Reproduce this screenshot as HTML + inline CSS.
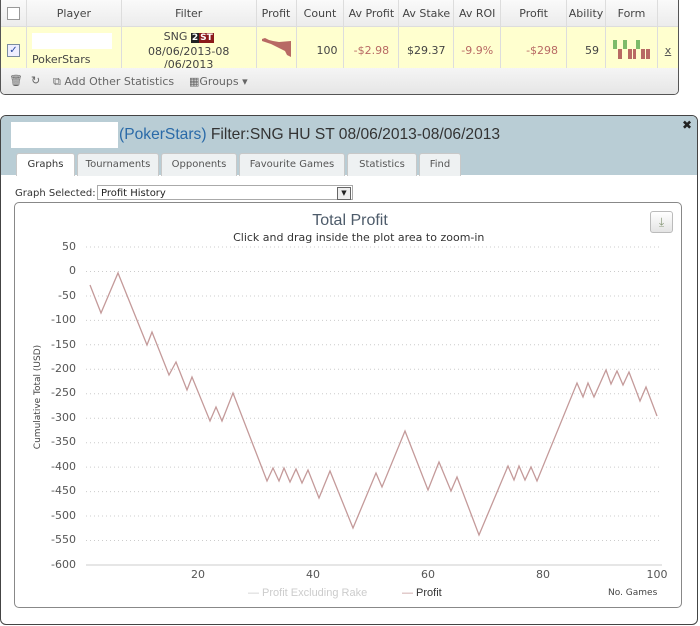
<!DOCTYPE html>
<html><head><meta charset="utf-8"><style>
body{margin:0;width:700px;height:626px;background:#fff;font-family:"DejaVu Sans","Liberation Sans",sans-serif;position:relative;overflow:hidden}
.a{position:absolute}
#top{left:0;top:0;width:677px;height:94px;border:1px solid #555;border-top:none;border-radius:0 0 5px 5px;overflow:hidden;background:#f2f2f2}
table{border-collapse:collapse;font-size:11px;color:#444;position:absolute;left:0;top:0}
td{border-right:1px solid #ddd;padding:0;text-align:center}
tr.h td{height:26px;background:linear-gradient(#fafafa,#ececec);border-bottom:1px solid #ddd}
tr.d td{height:41px;background:#ffffcf;border-bottom:1px solid #ddd}
.neg{color:#b86a64}
.tb{top:68px;left:0;width:677px;height:26px;background:linear-gradient(#f5f5f5,#e6e6e6);font-size:11px;color:#666}
#win{left:0;top:115px;width:696px;height:508px;border:1px solid #444;border-radius:6px;background:#fff;overflow:hidden}
#hd{left:0;top:0;width:696px;height:59px;background:#b9cdd5}
.tab{top:37px;height:22px;background:#eef1f2;border:1px solid #c8c8c8;border-bottom:none;font-size:10px;color:#555;text-align:center;line-height:22px;border-radius:3px 3px 0 0}
#chart{left:14px;top:87px;width:666px;height:404px;border:1px solid #888;border-radius:5px}
.yl{font-size:11px;color:#555;width:40px;text-align:right}
.xl{font-size:11px;color:#555;width:30px;text-align:center}
</style></head><body>
<div id="top" class="a">
<table>
<tr class="h"><td style="width:25px"><div style="width:11px;height:11px;border:1px solid #999;background:#fff;margin:auto"></div></td><td style="width:94px">Player</td><td style="width:134px">Filter</td><td style="width:39px">Profit</td><td style="width:47px">Count</td><td style="width:54px">Av Profit</td><td style="width:54px">Av Stake</td><td style="width:46px">Av ROI</td><td style="width:65px">Profit</td><td style="width:38px">Ability</td><td style="width:51px">Form</td><td style="width:20px;border-right:none"></td></tr>
<tr class="d"><td><div style="width:11px;height:11px;border:1px solid #7a8ca0;background:#eef;margin:auto;font-size:10px;line-height:11px;color:#2a4aa0">✓</div></td>
<td style="text-align:left;vertical-align:top;padding:6px 0 0 5px"><div style="width:80px;height:16px;background:#fff;margin-bottom:4px"></div>PokerStars</td>
<td style="line-height:13px">SNG <span style="background:#222;color:#fff;font-weight:bold;font-size:9px;padding:0 1px">2</span><span style="background:#8b1a1a;color:#fff;font-weight:bold;font-size:9px;padding:0 1px">ST</span><br>08/06/2013-08<br>/06/2013</td>
<td><svg width="39" height="41"><polygon points="5,10 8,9 12,11 16,12 22,13 34,12 34,28 30,26 28,22 24,20 20,18 14,15 8,13 5,12" fill="#b86a64"/></svg></td>
<td style="text-align:right;padding-right:6px">100</td><td class="neg">-$2.98</td><td>$29.37</td><td class="neg">-9.9%</td><td class="neg" style="text-align:right;padding-right:8px">-$298</td><td style="text-align:right;padding-right:6px">59</td>
<td><svg width="51" height="41"><g fill="#7dbb6a"><rect x="7" y="11" width="4" height="9"/><rect x="17" y="11" width="4" height="9"/><rect x="30" y="11" width="4" height="9"/></g><g fill="#b86a64"><rect x="12" y="20" width="4" height="10"/><rect x="22" y="20" width="4" height="10"/><rect x="27" y="20" width="3" height="10"/><rect x="35" y="20" width="4" height="10"/><rect x="40" y="20" width="4" height="10"/></g></svg></td>
<td style="border-right:none;text-decoration:underline;color:#555">x</td></tr>
</table>
<div class="a tb"><span class="a" style="left:8px;top:6px">🗑</span><span class="a" style="left:30px;top:6px">↻</span><span class="a" style="left:52px;top:7px">⧉ Add Other Statistics</span><span class="a" style="left:188px;top:7px">▦Groups ▾</span></div>
</div>
<div id="win" class="a">
<div id="hd" class="a">
<div class="a" style="left:10px;top:6px;width:107px;height:26px;background:#fff"></div>
<div class="a" style="left:118px;top:10px;font-family:'Liberation Sans',sans-serif;font-size:15.6px;color:#333"><span style="color:#2a6aa8">(PokerStars)</span> Filter:SNG HU ST 08/06/2013-08/06/2013</div>
<div class="a" style="right:5px;top:2px;font-size:12px;font-weight:bold;color:#222">✖</div>
<div class="a tab" style="left:15px;width:57px;background:#fff;color:#333">Graphs</div>
<div class="a tab" style="left:76px;width:80px">Tournaments</div>
<div class="a tab" style="left:160px;width:74px">Opponents</div>
<div class="a tab" style="left:238px;width:104px">Favourite Games</div>
<div class="a tab" style="left:346px;width:68px">Statistics</div>
<div class="a tab" style="left:418px;width:40px">Find</div>
</div>
<div class="a" style="left:14px;top:72px;font-size:10px;color:#333">Graph Selected:</div>
<div class="a" style="left:96px;top:69px;width:256px;height:15px;border:1px solid #aaa;font-size:10px;line-height:15px;color:#222;padding-left:3px;box-sizing:border-box">Profit History<div class="a" style="right:1px;top:1px;width:12px;height:11px;border:1px solid #666;background:#eee;font-size:7px;line-height:11px;text-align:center">▼</div></div>
</div>
<div id="chart" class="a" style="left:14px;top:202px"></div>
<div class="a" style="left:0;top:212px;width:700px;text-align:center;font-size:16px;color:#4d5b6a;font-family:'Liberation Sans',sans-serif">Total Profit</div>
<div class="a" style="left:0;top:231px;width:700px;text-align:center;font-size:11px;color:#333">&nbsp;&nbsp;&nbsp;&nbsp;&nbsp;Click and drag inside the plot area to zoom-in</div>
<div class="a" style="left:650px;top:211px;width:21px;height:20px;border:1px solid #bbb;border-radius:3px;background:linear-gradient(#fff,#e4e4e4);color:#8a9a7a;font-size:12px;text-align:center;line-height:20px">⤓</div>
<svg class="a" style="left:0;top:0" width="700" height="626">
<g stroke="#ccc" stroke-dasharray="1,3">
<line x1="86" x2="662" y1="247" y2="247"/><line x1="86" x2="662" y1="271.5" y2="271.5"/><line x1="86" x2="662" y1="296" y2="296"/><line x1="86" x2="662" y1="320.4" y2="320.4"/><line x1="86" x2="662" y1="344.8" y2="344.8"/><line x1="86" x2="662" y1="369.3" y2="369.3"/><line x1="86" x2="662" y1="393.8" y2="393.8"/><line x1="86" x2="662" y1="418.2" y2="418.2"/><line x1="86" x2="662" y1="442.7" y2="442.7"/><line x1="86" x2="662" y1="467.1" y2="467.1"/><line x1="86" x2="662" y1="491.6" y2="491.6"/><line x1="86" x2="662" y1="516" y2="516"/><line x1="86" x2="662" y1="540.5" y2="540.5"/>
</g>
<line x1="86" x2="662" y1="565" y2="565" stroke="#ccc"/>
<polyline fill="none" stroke="#c49a9a" stroke-width="1.3" points="90,285 101,313 118,273 147,345 152,332 169,375 176,362 187,390 192,377 210,421 216,407 222,421 233,393 267,481 273,468 279,481 284,468 290,482 296,469 302,483 308,470 319,498 330,471 353,528 376,473 382,487 405,431 428,490 439,462 451,491 457,477 479,535 508,466 514,480 519,466 525,480 531,467 537,481 577,383 583,397 588,383 594,397 606,370 611,384 617,371 623,385 629,372 640,401 646,387 657,416"/>
</svg>
<div class="a yl" style="left:36px;top:240px">50</div><div class="a yl" style="left:36px;top:264px">0</div><div class="a yl" style="left:36px;top:289px">-50</div><div class="a yl" style="left:36px;top:313px">-100</div><div class="a yl" style="left:36px;top:338px">-150</div><div class="a yl" style="left:36px;top:362px">-200</div><div class="a yl" style="left:36px;top:386px">-250</div><div class="a yl" style="left:36px;top:411px">-300</div><div class="a yl" style="left:36px;top:435px">-350</div><div class="a yl" style="left:36px;top:460px">-400</div><div class="a yl" style="left:36px;top:484px">-450</div><div class="a yl" style="left:36px;top:509px">-500</div><div class="a yl" style="left:36px;top:533px">-550</div><div class="a yl" style="left:36px;top:558px">-600</div>
<div class="a" style="left:-22px;top:392px;transform:rotate(-90deg);font-size:9px;color:#444;width:120px;text-align:center">Cumulative Total (USD)</div>
<div class="a xl" style="left:183px;top:568px">20</div><div class="a xl" style="left:298px;top:568px">40</div><div class="a xl" style="left:413px;top:568px">60</div><div class="a xl" style="left:528px;top:568px">80</div><div class="a xl" style="left:642px;top:568px">100</div>
<div class="a" style="left:248px;top:587px;font-size:11px;color:#ccc;font-family:'Liberation Sans',sans-serif">— Profit Excluding Rake</div>
<div class="a" style="left:402px;top:587px;font-size:11px;color:#333;font-family:'Liberation Sans',sans-serif"><span style="color:#c49a9a">—</span> Profit</div>
<div class="a" style="left:608px;top:588px;font-size:9px;color:#444">No. Games</div>
</body></html>
